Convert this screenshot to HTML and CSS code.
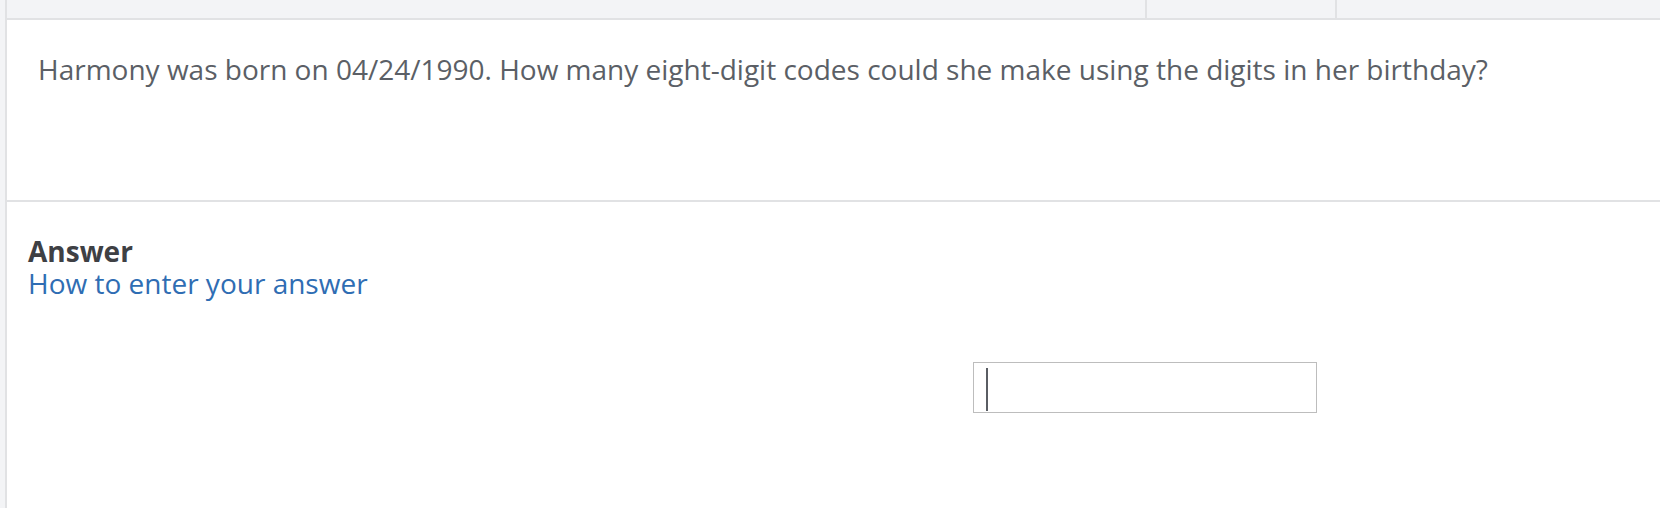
FILE: index.html
```html
<!DOCTYPE html>
<html lang="en">
<head>
  <meta charset="UTF-8" />
  <title>Question</title>
  <link rel="stylesheet" href="styles.css">
</head>
<body>
  <div class="page">
    <div class="rail"></div>
    <div class="main">
      <!-- tab strip -->
      <div class="tabs">
        <div class="tab tab-wide"></div>
        <div class="tab tab-mid"></div>
        <div class="tab tab-rest"></div>
      </div>

      <!-- question -->
      <div class="question">
        Harmony was born on 04/24/1990. How many eight-digit codes could she make using the digits in her birthday?
      </div>

      <!-- answer -->
      <div class="answer">
        <div class="answer-title">Answer</div>
        <a href="#" class="answer-help">How to enter your answer</a>
        <div class="answer-box"><span class="caret"></span></div>
      </div>
    </div>
  </div>
</body>
</html>
```

FILE: styles.css
```css
body {
  margin: 0;
  font-family: "Open Sans", Arial, sans-serif;
  background: #f3f4f6;
}

.page {
  display: flex;
  min-height: 508px;
}

.rail {
  width: 5px;
  flex-shrink: 0;
  background: #f3f4f6;
}

.main {
  flex: 1;
  background: white;
  border-left: 2px solid #e1e2e4;
}

.tabs {
  display: flex;
  height: 18px;
  background: #f3f4f6;
  border-bottom: 2px solid #e1e2e4;
}

.tab {
  height: 100%;
}

.tab-wide {
  width: 1138px;
  border-right: 2px solid #e1e2e4;
}

.tab-mid {
  width: 188px;
  border-right: 2px solid #e1e2e4;
}

.tab-rest {
  flex: 1;
}

.question {
  height: 150px;
  padding: 30px 0 0 31px;
  font-size: 28px;
  line-height: 38px;
  color: #5b5f66;
  border-bottom: 2px solid #e1e2e4;
}

.answer {
  padding: 33px 0 60px 21px;
  font-size: 28px;
  line-height: 32px;
}

.answer-title {
  font-weight: bold;
  color: #3e4044;
}

.answer-help {
  display: block;
  color: #2f6db3;
  text-decoration: none;
}

.answer-box {
  width: 330px;
  height: 49px;
  margin: 63px 0 0 945px;
  border: 1px solid #bdbdbd;
  padding-left: 12px;
}

.caret {
  display: block;
  width: 2px;
  height: 43px;
  margin-top: 5px;
  background: #5a5d63;
}
```
